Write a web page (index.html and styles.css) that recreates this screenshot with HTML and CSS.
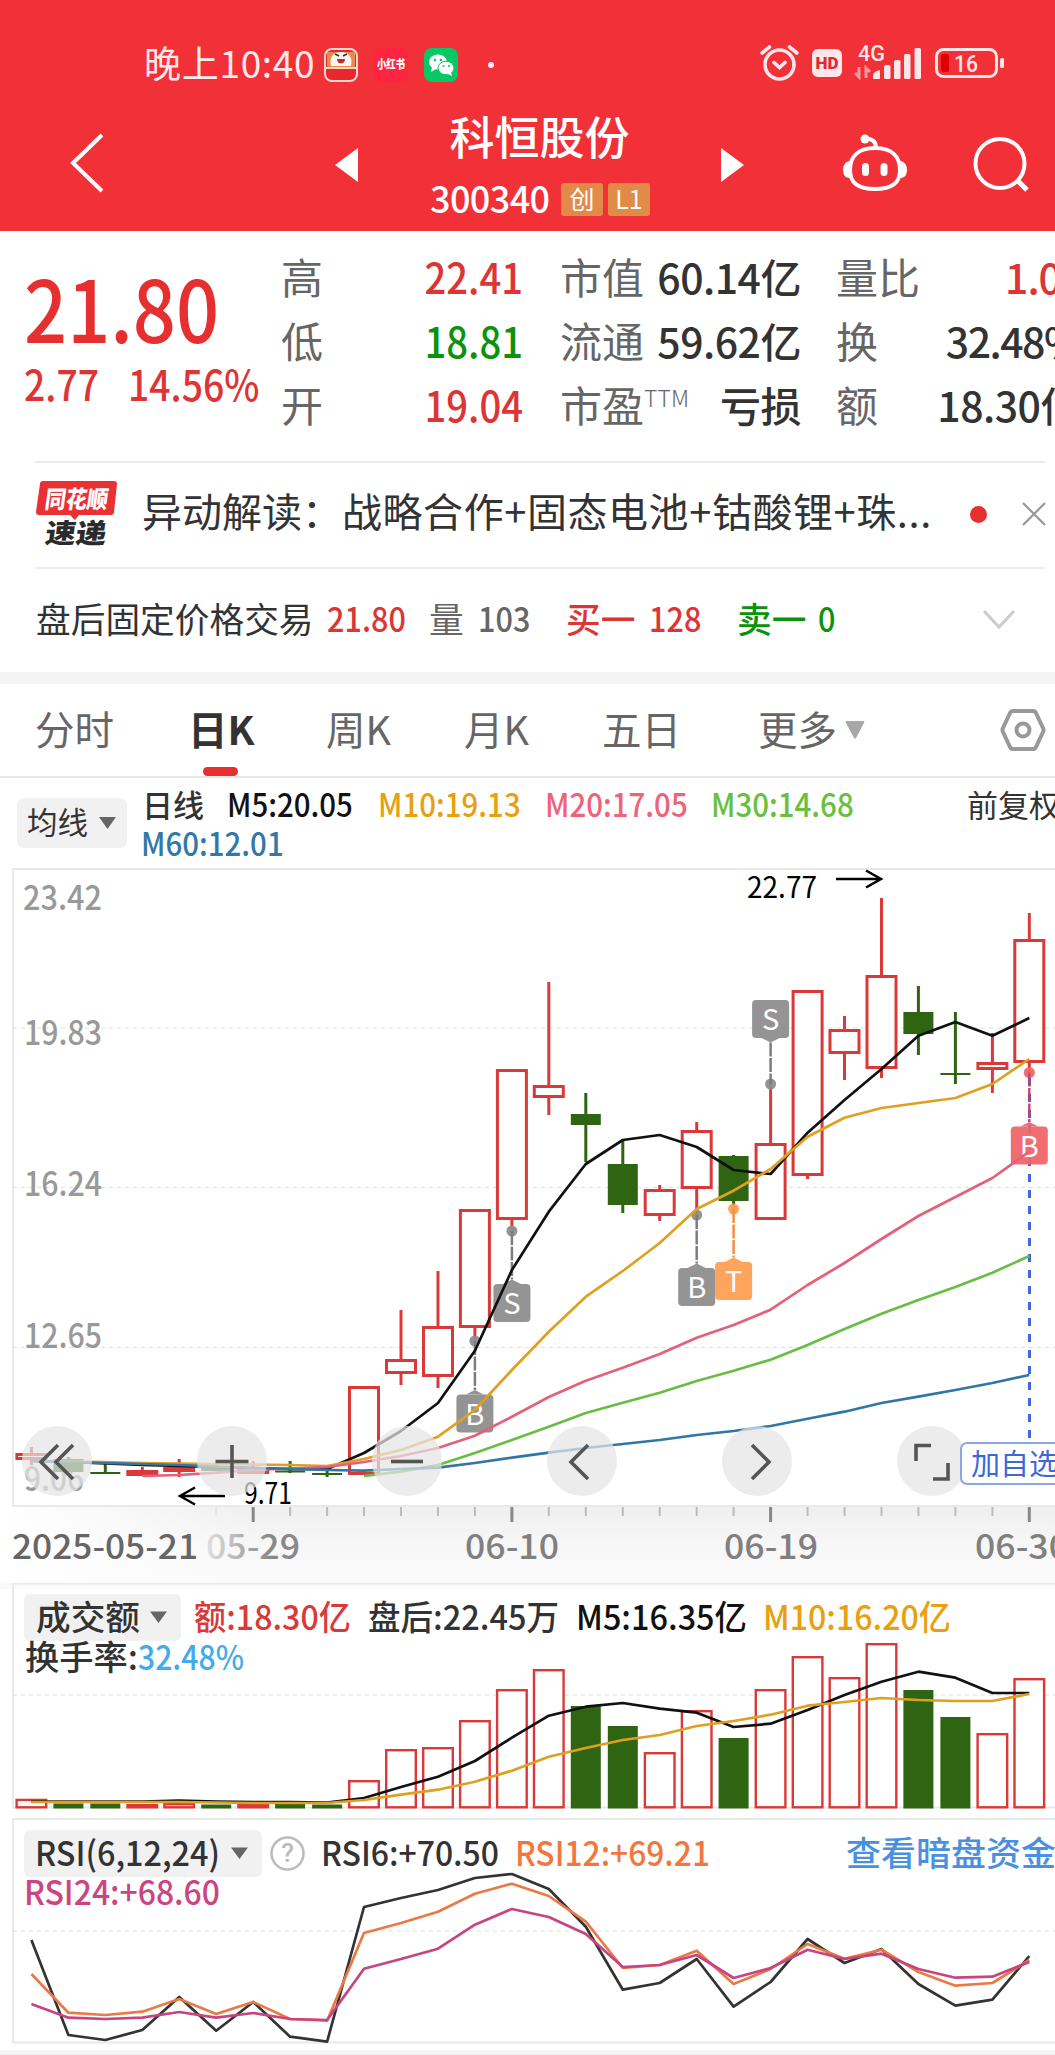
FILE: index.html
```html
<!DOCTYPE html>
<html lang="zh-CN">
<head>
    <meta charset="UTF-8">
    <meta name="viewport" content="width=device-width, initial-scale=1.0">
    <title>科恒股份 300340</title>
    <link rel="stylesheet" href="styles.css">
</head>
<body>
    <header class="header">
        <div class="status">
            <span class="status-time">晚上10:40</span>
            <svg class="app" width="34" height="34" viewBox="0 0 34 34">
                <rect x="1" y="1" width="32" height="32" rx="7" fill="#e8262b" stroke="#f6d9d2" stroke-width="2"/>
                <path d="M3 4h28v15H3z" fill="#e88a4e"/>
                <path d="M7 18c-2-8 2-14 10-14s12 6 10 14z" fill="#fff4ee"/>
                <path d="M11 6l4 2M19 8l4-2" stroke="#333" stroke-width="1.5"/>
                <path d="M13 11h8c0 6-8 6-8 0z" fill="#b93030"/>
                <path d="M2 20h30" stroke="#f8dcc8" stroke-width="2"/>
            </svg>
            <svg class="app" width="34" height="34" viewBox="0 0 34 34">
                <rect width="34" height="34" rx="8" fill="#ff2442"/>
                <text x="17" y="21" text-anchor="middle" textLength="28" lengthAdjust="spacingAndGlyphs" class="app-text">小红书</text>
            </svg>
            <svg class="app" width="34" height="34" viewBox="0 0 34 34">
                <rect width="34" height="34" rx="8" fill="#07c865"/>
                <ellipse cx="14" cy="14" rx="9" ry="7.5" fill="#fff"/>
                <path d="M8 19l-1 5 5-3z" fill="#fff"/>
                <ellipse cx="22" cy="20" rx="8" ry="6.8" fill="#fff" stroke="#07c865"/>
                <path d="M24 26l4 2-1-4z" fill="#fff"/>
                <g fill="#07c865"><circle cx="11" cy="12" r="1.3"/><circle cx="17" cy="12" r="1.3"/><circle cx="19.5" cy="18" r="1.1"/><circle cx="25" cy="18" r="1.1"/></g>
            </svg>
            <i class="status-dot"></i>
            <svg class="status-icons" width="260" height="60" viewBox="0 0 260 60">
                <g fill="none" stroke="#ffe6e8" stroke-width="3.6" stroke-linecap="round">
                    <circle cx="29.500" cy="29.500" r="14.500"/>
                    <path d="M24 27.500l5.500 5 5.500-5M12 18l7.500-6M47 18l-7.500-6"/>
                </g>
                <rect x="62" y="14" width="30" height="28" rx="6" fill="#ffe6e8"/>
                <text x="65.500" y="34" textLength="23" lengthAdjust="spacingAndGlyphs" class="hd">HD</text>
                <text x="108" y="26" textLength="27" lengthAdjust="spacingAndGlyphs" class="net">4G</text>
                <path d="M109 32v10l-4-4M116 43V33l4 4" fill="none" stroke="#f9989c" stroke-width="3"/>
                <g fill="#ffe6e8">
                    <path d="M123 40q0-3 7-5v9h-7z"/>
                    <rect x="134" y="30" width="6.500" height="14" rx="1.500"/>
                    <rect x="144" y="25" width="6.500" height="19" rx="1.500"/>
                    <rect x="154" y="19" width="6.500" height="25" rx="1.500"/>
                    <rect x="164.500" y="13" width="6.500" height="31" rx="1.500"/>
                    <rect x="250" y="23" width="4" height="10" rx="1.500"/>
                </g>
                <rect x="186.500" y="14.500" width="60" height="27" rx="7" fill="none" stroke="#ffe6e8" stroke-width="3"/>
                <rect x="191" y="19" width="8" height="18" rx="2" fill="#e00000"/>
                <text x="204" y="37" textLength="24" lengthAdjust="spacingAndGlyphs" class="bat">16</text>
            </svg>
        </div>
        <nav class="nav">
            <svg class="back" width="36" height="62" viewBox="0 0 36 62"><path d="M33 3L4 31l29 28" fill="none" stroke="#fff" stroke-width="4"/></svg>
            <svg class="prev" width="23" height="34" viewBox="0 0 23 34"><path d="M23 0v34L0 17z" fill="#fff"/></svg>
            <div class="title">
                <h1>科恒股份</h1>
                <div class="code">
                    <span>300340</span>
                    <b>创</b>
                    <b>L1</b>
                </div>
            </div>
            <svg class="next" width="23" height="34" viewBox="0 0 23 34"><path d="M0 0v34l23-17z" fill="#fff"/></svg>
            <svg class="robot" width="66" height="60" viewBox="0 0 66 60">
                <g fill="none" stroke="#fff" stroke-width="4">
                    <path d="M33 15c16 0 25 8 25 22s-9 19-25 19S8 51 8 37s9-22 25-22z"/>
                    <path d="M34 14c0-6-4-8-10-9" stroke-linecap="round"/>
                </g>
                <circle cx="23" cy="6" r="4.500" fill="#fff"/>
                <path d="M7 28q-6 2-6 9t6 8zM59 28q6 2 6 9t-6 8z" fill="#fff"/>
                <rect x="20" y="30" width="7" height="13" rx="3.500" fill="#fff"/>
                <rect x="38.500" y="30" width="7" height="13" rx="3.500" fill="#fff"/>
            </svg>
            <svg class="search" width="56" height="56" viewBox="0 0 56 56" fill="none" stroke="#fff" stroke-width="4">
                <circle cx="27" cy="27.500" r="24.500"/>
                <path d="M44 44l10 10" stroke-width="5"/>
            </svg>
        </nav>
    </header>

    <section class="quote">
        <div class="price">
            <div class="price-now"><span>21.80</span></div>
            <div class="price-change"><span>2.77</span><span>14.56%</span></div>
        </div>
        <dl class="stats stats-a">
            <dt>高</dt><dd class="up">22.41</dd>
            <dt>低</dt><dd class="down">18.81</dd>
            <dt>开</dt><dd class="up">19.04</dd>
        </dl>
        <dl class="stats stats-b">
            <dt>市值</dt><dd>60.14亿</dd>
            <dt>流通</dt><dd>59.62亿</dd>
            <dt>市盈<sup>TTM</sup></dt><dd class="loss">亏损</dd>
        </dl>
        <dl class="stats stats-c">
            <dt>量比</dt><dd class="up cut">1.0</dd>
            <dt>换</dt><dd class="turnover">32.48%</dd>
            <dt>额</dt><dd>18.30亿</dd>
        </dl>
    </section>

    <section class="news">
        <svg class="news-logo" width="82" height="68" viewBox="0 0 82 68">
            <path d="M7 1h71q3 0 3 3l-3 28q0 3-3 3H43l-4 5-5-5H3q-3 0-3-3L4 4q0-3 3-3z" fill="#e93033"/>
            <g transform="skewX(-8)">
                <text x="12" y="28" textLength="63" lengthAdjust="spacingAndGlyphs" class="logo-top">同花顺</text>
                <text x="17" y="63" textLength="61" lengthAdjust="spacingAndGlyphs" class="logo-bottom">速递</text>
            </g>
        </svg>
        <p>异动解读：<span>战略合作+固态电池+钴酸锂+珠...</span></p>
        <i class="news-dot"></i>
        <svg width="24" height="24" viewBox="0 0 24 24" stroke="#999" stroke-width="2.200"><path d="M1 1l22 22M23 1L1 23"/></svg>
    </section>

    <section class="after">
        <span class="after-name">盘后固定价格交易</span>
        <span class="after-price num up">21.80</span>
        <span class="after-label">量</span>
        <span class="after-vol num">103</span>
        <span class="after-buy up">买一</span>
        <span class="after-buyn num up">128</span>
        <span class="after-sell down">卖一</span>
        <span class="num down">0</span>
        <svg class="after-more" width="32" height="20" viewBox="0 0 32 20" fill="none" stroke="#ccc" stroke-width="3"><path d="M1 1l15 16L31 1"/></svg>
    </section>

    <div class="gap"></div>

    <nav class="tabs">
        <a>分时</a>
        <a class="active">日K</a>
        <a>周K</a>
        <a>月K</a>
        <a>五日</a>
        <a>更多<svg width="20" height="18" viewBox="0 0 20 18"><path d="M2 0h16q2 0 1 2l-8 15q-1 1-2 0L1 2Q0 0 2 0z" fill="#a8a8a8"/></svg></a>
        <svg class="gear" width="46" height="44" viewBox="0 0 46 44" fill="none" stroke="#999" stroke-width="4">
            <path d="M13 3h20q2 0 3 2l7 15q1 2 0 4l-7 15q-1 2-3 2H13q-2 0-3-2L3 24q-1-2 0-4L10 5q1-2 3-2z"/>
            <circle cx="23" cy="22" r="6.500"/>
        </svg>
    </nav>

    <section class="ma">
        <button class="ma-btn">均线<svg width="17" height="12" viewBox="0 0 17 12"><path d="M0 0h17L8.500 12z" fill="#666"/></svg></button>
        <div class="ma-lines">
            <div class="ma-row">
                <span class="ma-name">日线</span>
                <span class="m5">M5:20.05</span>
                <span class="m10">M10:19.13</span>
                <span class="m20">M20:17.05</span>
                <span class="m30">M30:14.68</span>
            </div>
            <div class="ma-row"><span class="m60">M60:12.01</span></div>
        </div>
        <span class="adjust">前复权</span>
    </section>

    <section class="chart">
        <svg id="kline" width="1055" height="715" viewBox="0 868 1055 715">
            <defs>
                <linearGradient id="shade" x1="0" y1="0" x2="0" y2="1">
                    <stop offset="0" stop-color="#efefef"/>
                    <stop offset=".5" stop-color="#f7f7f7"/>
                    <stop offset="1" stop-color="#fafafa"/>
                </linearGradient>
                <linearGradient id="fade" x1="0" y1="0" x2="1" y2="0">
                    <stop offset="0" stop-color="#fff"/>
                    <stop offset="1" stop-color="#fff" stop-opacity="0"/>
                </linearGradient>
                <linearGradient id="dateFade" gradientUnits="userSpaceOnUse" x1="205" y1="0" x2="300" y2="0">
                    <stop offset="0" stop-color="#e2e2e2"/>
                    <stop offset=".7" stop-color="#888"/>
                </linearGradient>
            </defs>
            <rect x="0" y="1507" width="1055" height="76" fill="url(#shade)"/>
            <rect x="0" y="1507" width="260" height="76" fill="url(#fade)"/>
            <path class="frame" d="M1055 869H13V1506H1055"/>
            <path class="grid" d="M13 1028H1055M13 1187.500H1055M13 1347.500H1055"/>
            <g class="price-axis">
                <text x="23" y="910" textLength="79" lengthAdjust="spacingAndGlyphs">23.42</text>
                <text x="24" y="1045" textLength="78" lengthAdjust="spacingAndGlyphs">19.83</text>
                <text x="24" y="1196" textLength="78" lengthAdjust="spacingAndGlyphs">16.24</text>
                <text x="24" y="1348" textLength="78" lengthAdjust="spacingAndGlyphs">12.65</text>
                <text x="24" y="1491" textLength="60" lengthAdjust="spacingAndGlyphs">9.06</text>
            </g>
            <g id="candles"></g>
            <path class="cursor" d="M1029.500 1078V1443"/>
            <g id="marks"></g>
            <g id="averages"></g>
            <g class="extreme">
                <text x="747" y="898" textLength="70" lengthAdjust="spacingAndGlyphs">22.77</text>
                <path d="M836 879h45M866 870.500l15 8.500-15 8.500"/>
                <text x="244" y="1504" textLength="48" lengthAdjust="spacingAndGlyphs">9.71</text>
                <path d="M225 1496h-45M195 1487.500l-15 8.500 15 8.500"/>
            </g>
            <g id="ticks"></g>
            <g class="dates">
                <text class="date-start" x="12" y="1559" textLength="186" lengthAdjust="spacingAndGlyphs">2025-05-21</text>
                <text class="date-faded" x="206" y="1559" textLength="94" lengthAdjust="spacingAndGlyphs">05-29</text>
                <text x="465" y="1559" textLength="94" lengthAdjust="spacingAndGlyphs">06-10</text>
                <text x="724" y="1559" textLength="94" lengthAdjust="spacingAndGlyphs">06-19</text>
                <text x="975" y="1559" textLength="94" lengthAdjust="spacingAndGlyphs">06-30</text>
            </g>
        </svg>
        <div class="tools">
            <button><svg viewBox="0 0 70 70"><path d="M36 19L19 36l17 17M51 19L34 36l17 17"/></svg></button>
            <button><svg viewBox="0 0 70 70"><path d="M35 19v33M18.500 35.500h33"/></svg></button>
            <button><svg viewBox="0 0 70 70"><path d="M19 35.500h32"/></svg></button>
            <button><svg viewBox="0 0 70 70"><path d="M41 19L24 36l17 17"/></svg></button>
            <button><svg viewBox="0 0 70 70"><path d="M30 19l17 17-17 17"/></svg></button>
            <button><svg viewBox="0 0 70 70"><path d="M19 35V19.500h15M51 37v16H36"/></svg></button>
        </div>
        <span class="add">加自选</span>
    </section>

    <section class="panel">
        <svg width="1055" height="235" viewBox="0 1583 1055 235">
            <rect x="0" y="1583" width="1055" height="6" fill="#fafafa"/>
            <path class="frame" d="M1055 1583.500H13V1807.500H1055"/>
            <path class="grid" d="M13 1695H1055"/>
            <rect class="chip" x="24" y="1594" width="157" height="47" rx="6"/>
            <path d="M150 1611.500h17l-8.500 11.500z" fill="#666"/>
            <g id="volumes"></g>
            <g id="volumeAverages"></g>
            <g class="legend">
                <text x="36" y="1630" textLength="104" lengthAdjust="spacingAndGlyphs">成交额</text>
                <text x="194" y="1630" textLength="157" lengthAdjust="spacingAndGlyphs" fill="#d93a39">额:18.30亿</text>
                <text x="368" y="1630" textLength="191" lengthAdjust="spacingAndGlyphs">盘后:22.45万</text>
                <text x="576" y="1630" textLength="171" lengthAdjust="spacingAndGlyphs" fill="#111">M5:16.35亿</text>
                <text x="763" y="1630" textLength="188" lengthAdjust="spacingAndGlyphs" fill="#e8a010">M10:16.20亿</text>
                <text x="25" y="1669.500" textLength="113" lengthAdjust="spacingAndGlyphs">换手率:</text>
                <text x="138" y="1669.500" textLength="106" lengthAdjust="spacingAndGlyphs" fill="#42abe9">32.48%</text>
            </g>
        </svg>
    </section>

    <section class="panel">
        <svg width="1055" height="232" viewBox="0 1818 1055 232">
            <path class="frame" d="M1055 1819H13V2042.500H1055"/>
            <path class="grid" d="M13 1931H1055"/>
            <rect class="chip" x="24" y="1830" width="238" height="47" rx="6"/>
            <path d="M231 1847.500h17l-8.500 11.500z" fill="#666"/>
            <circle cx="287.500" cy="1853.500" r="16" fill="none" stroke="#bbb" stroke-width="2.500"/>
            <text x="287.500" y="1862" text-anchor="middle" class="help">?</text>
            <g id="rsi"></g>
            <g class="legend">
                <text x="35" y="1866" textLength="185" lengthAdjust="spacingAndGlyphs">RSI(6,12,24)</text>
                <text x="321" y="1866" textLength="178" lengthAdjust="spacingAndGlyphs">RSI6:+70.50</text>
                <text x="515" y="1866" textLength="195" lengthAdjust="spacingAndGlyphs" fill="#f0783e">RSI12:+69.21</text>
                <text x="846" y="1865.500" textLength="210" lengthAdjust="spacingAndGlyphs" fill="#4a90e0">查看暗盘资金</text>
                <text x="24" y="1905" textLength="196" lengthAdjust="spacingAndGlyphs" fill="#cb4583">RSI24:+68.60</text>
            </g>
        </svg>
    </section>

    <script src="chart.js"></script>
</body>
</html>
```
FILE: styles.css
```css
* {
    box-sizing: border-box;
}

body {
    margin: 0;
    width: 1055px;
    height: 2055px;
    overflow: hidden;
    background: #f4f4f4;
    color: #333;
    font-family: "Noto Sans CJK SC", "Noto Sans", sans-serif;
}

svg {
    display: block;
    flex: none;
}

.up {
    color: #dd3535;
}

.down {
    color: #0b930b;
}

/* header */
.header {
    height: 231px;
    background: #f23037;
    color: #fff;
}

.status {
    display: flex;
    align-items: center;
    height: 96px;
    padding: 33px 0 0 144px;
    color: #ffe9ea;
}

.status-time {
    width: 180px;
    margin-top: -6px;
    font-size: 37px;
    line-height: 60px;
    letter-spacing: 0.7px;
    white-space: nowrap;
}

.app {
    margin-right: 16px;
}

.app-text {
    font-size: 12px;
    font-weight: 900;
    fill: #fff;
}

.status-dot {
    width: 6px;
    height: 6px;
    margin-left: 14px;
    border-radius: 50%;
    background: #ffe9ea;
}

.status-icons {
    margin-left: 256px;
}

.hd {
    font: 900 17px Roboto, sans-serif;
    fill: #e02a32;
}

.net {
    font: 500 22px Roboto, sans-serif;
    fill: #ffe6e8;
}

.bat {
    font: 500 24px Roboto, sans-serif;
    fill: #ffe6e8;
}

.nav {
    display: flex;
    height: 135px;
    padding-left: 69px;
}

.back {
    margin-top: 36px;
}

.prev {
    margin: 52px 0 0 230px;
}

.title {
    width: 363px;
    text-align: center;
}

.title h1 {
    margin: 0;
    padding-top: 9px;
    font-size: 45px;
    font-weight: 500;
    line-height: 62px;
}

.code {
    display: flex;
    align-items: center;
    margin: 13px 0 0 72px;
    height: 38px;
    font-size: 36px;
    line-height: 38px;
}

.code span {
    width: 131px;
    margin-top: -5px;
    font-weight: 500;
    text-align: left;
    letter-spacing: -0.6px;
}

.code b {
    width: 42px;
    height: 33px;
    margin-right: 5px;
    border-radius: 3px;
    background: #e28b49;
    font-size: 25px;
    font-weight: 400;
    line-height: 31px;
}

.next {
    margin-top: 52px;
}

.robot {
    margin: 37px 0 0 98px;
}

.search {
    margin: 40px 0 0 65px;
}

/* quote */
.quote {
    display: flex;
    height: 230px;
    background: #fff;
    overflow: hidden;
}

.price {
    width: 281px;
    flex: none;
    padding-left: 24px;
    color: #e63030;
}

.price-now {
    margin-top: 20px;
    font-size: 86px;
    font-weight: 500;
    line-height: 110px;
}

.price-now span {
    display: inline-block;
    transform: scaleX(0.88);
    transform-origin: left;
}

.price-change {
    display: flex;
    margin-top: 2px;
    color: #dd3535;
    font-size: 42px;
    font-weight: 500;
    line-height: 40px;
}

.price-change span {
    width: 104px;
    flex: none;
    transform: scaleX(0.89);
    transform-origin: left;
}

.stats {
    display: grid;
    grid-template-columns: 84px 1fr;
    grid-auto-rows: 64px;
    margin: 13px 0 0;
    flex: none;
    font-size: 42px;
    line-height: 64px;
    white-space: nowrap;
}

.stats dt {
    color: #666;
}

.stats dd {
    margin: 0;
    font-weight: 500;
    text-align: right;
    transform: scaleX(0.91);
    transform-origin: right;
}

.stats-a {
    width: 242px;
}

.stats-b {
    width: 241px;
    margin-left: 37px;
}

.stats-b dd,
.stats-c dd {
    transform: none;
    font-size: 41px;
    letter-spacing: -0.5px;
}

.stats-c {
    width: 245px;
    margin-left: 35px;
}

.stats-c .cut {
    padding-right: 20px;
    letter-spacing: -1px;
}

.stats-c .turnover {
    letter-spacing: -1.5px;
}

.stats sup {
    font-size: 23px;
    font-weight: 300;
    line-height: 0;
    vertical-align: 15px;
}

/* news line */
.news {
    display: flex;
    align-items: center;
    height: 106px;
    padding-left: 36px;
    background: linear-gradient(#ececec, #ececec) 35px 0 / 1010px 2px no-repeat, #fff;
}

.news-logo {
    margin-right: 24px;
}

.logo-top {
    font-size: 24px;
    font-weight: 900;
    fill: #fff;
}

.logo-bottom {
    font-size: 27px;
    font-weight: 900;
    fill: #2b2b2b;
}

.news p {
    width: 828px;
    margin: -8px 0 0;
    font-size: 40px;
    line-height: 60px;
    white-space: nowrap;
}

.news p span {
    letter-spacing: 0.55px;
}

.news-dot {
    width: 17px;
    height: 17px;
    margin-right: 35px;
    border-radius: 50%;
    background: #e63030;
}

/* after-hours trading */
.after {
    display: flex;
    align-items: center;
    height: 105px;
    padding-left: 36px;
    background: linear-gradient(#ececec, #ececec) 35px 0 / 1010px 2px no-repeat, #fff;
    font-size: 34.7px;
    line-height: 50px;
    white-space: nowrap;
}

.after span {
    flex: none;
    margin-top: -4px;
}

.after .num {
    font-size: 34px;
    font-weight: 500;
    transform: scaleX(0.9);
    transform-origin: left;
}

.after-name {
    width: 291px;
}

.after-price {
    width: 102px;
}

.after-label {
    width: 49px;
    color: #666;
}

.after-vol {
    width: 88px;
    color: #666;
}

.after-buy {
    width: 83px;
    font-weight: 500;
}

.after-buyn {
    width: 88px;
}

.after-sell {
    width: 81px;
    font-weight: 500;
}

.after-more {
    margin-left: 146px;
}

.gap {
    height: 12px;
    background: #f4f4f4;
}

/* period tabs */
.tabs {
    display: grid;
    grid-template-columns: 153px 138px 138px 138px 156px 242px 46px;
    align-items: center;
    height: 94px;
    padding-left: 35px;
    border-bottom: 2px solid #e8e8e8;
    background: #fff;
    color: #666;
    font-size: 39.5px;
    line-height: 90px;
}

.tabs a {
    display: flex;
    align-items: center;
    position: relative;
    margin-top: -4px;
}

.tabs a svg {
    margin: 4px 0 0 8px;
}

.tabs .active {
    color: #333;
    font-weight: 700;
}

.tabs .active::after {
    content: "";
    position: absolute;
    left: 15px;
    bottom: -3px;
    width: 35px;
    height: 9px;
    border-radius: 5px;
    background: #e63030;
}

/* moving averages */
.ma {
    display: flex;
    height: 90px;
    background: #fff;
    overflow: hidden;
    white-space: nowrap;
}

.ma-btn {
    display: flex;
    align-items: center;
    justify-content: space-between;
    width: 110px;
    height: 50px;
    margin: 20px 15px 0 17px;
    padding: 0 11px 4px 10px;
    border: 0;
    border-radius: 7px;
    background: #f1f1f1;
    color: #333;
    font: inherit;
    font-size: 30.5px;
    flex: none;
}

.ma-btn svg {
    margin-top: 3px;
}

.ma-lines {
    width: 825px;
    padding-top: 6px;
    flex: none;
}

.ma-row {
    display: flex;
    height: 39px;
    font-size: 32px;
    font-weight: 500;
    line-height: 39px;
}

.ma-row span {
    flex: none;
    width: 166.5px;
    transform: scaleX(0.92);
    transform-origin: left;
}

.ma-row .ma-name {
    width: 85px;
    font-size: 31px;
    transform: none;
}

.ma-row .m5 {
    width: 151px;
    color: #111;
}

.m10 {
    color: #e8a010;
}

.m20 {
    color: #ee6378;
}

.m30 {
    color: #68c13e;
}

.ma-row .m60 {
    margin-left: -1px;
    color: #3378a8;
}

.adjust {
    padding-top: 5px;
    font-size: 31px;
    line-height: 42px;
}

/* charts */
.chart {
    position: relative;
    background: #fff;
    overflow: hidden;
}

.panel {
    background: #fff;
}

.frame {
    fill: none;
    stroke: #e9e9e9;
    stroke-width: 2;
}

.grid {
    stroke: #dedede;
    stroke-width: 1.2;
    stroke-dasharray: 4 4;
}

.price-axis text,
.dates text {
    font-size: 34px;
    font-weight: 500;
    fill: #999;
}

.dates text {
    fill: #808080;
}

.dates .date-start {
    fill: #666;
}

.dates .date-faded {
    fill: url(#dateFade);
}

.extreme text {
    font-size: 30px;
    fill: #000;
}

.extreme path {
    fill: none;
    stroke: #000;
    stroke-width: 2.5;
}

.cursor {
    fill: none;
    stroke: #3d68d8;
    stroke-width: 3;
    stroke-dasharray: 8 8;
}

.line {
    fill: none;
    stroke-width: 2.7;
    stroke-linejoin: round;
}

.mark {
    opacity: 0.95;
}

.mark text {
    font-size: 29px;
    fill: #fff;
    text-anchor: middle;
}

.chip {
    fill: #f1f1f1;
}

.legend text {
    font-size: 34px;
    font-weight: 500;
}

.legend text:not([fill]) {
    fill: #333;
}

.help {
    font: 500 26px Roboto, sans-serif;
    fill: #bbb;
}

.tools {
    position: absolute;
    top: 558px;
    left: 22px;
    display: flex;
    gap: 105px;
}

.tools button {
    width: 70px;
    height: 70px;
    padding: 0;
    border: 0;
    border-radius: 50%;
    background: rgba(229, 229, 229, 0.72);
}

.tools path {
    fill: none;
    stroke: #555;
    stroke-width: 3.6;
}

.add {
    position: absolute;
    top: 574px;
    left: 960px;
    width: 110px;
    height: 43px;
    padding-left: 9px;
    border: 2px solid #8ba6e6;
    border-radius: 7px;
    background: #fff;
    color: #3d68d8;
    font-size: 29px;
    line-height: 37px;
    white-space: nowrap;
}
```
FILE: chart.js
```js
const RED = '#d93a39';
const GREEN = '#2f6512';
const first = 31.4;
const step = 36.96;
const x = i => +(first + step * i).toFixed(1);
const byId = id => document.getElementById(id);

// [rising, body top, body bottom, high, low]
const candles = [
    [1, 1453, 1460, 1447, 1465], [0, 1459, 1472, 1457, 1472], [0, 1472, 1474, 1461, 1474],
    [1, 1470, 1476, 1467, 1476], [1, 1467, 1472, 1459, 1477], [0, 1467, 1471, 1464, 1471],
    [1, 1467, 1474, 1461, 1474], [0, 1470.5, 1472.5, 1461, 1473], [0, 1473, 1475, 1471, 1477],
    [1, 1386, 1475, 1386, 1475], [1, 1359, 1374, 1310, 1385], [1, 1326, 1377, 1271, 1388],
    [1, 1209, 1328, 1209, 1341], [1, 1069, 1220, 1069, 1231], [1, 1085, 1098, 982, 1115],
    [0, 1114, 1125, 1093, 1162], [0, 1164, 1205, 1141, 1213], [1, 1189, 1216, 1185, 1221],
    [1, 1130, 1189, 1122, 1215], [0, 1156, 1201, 1155, 1209], [1, 1143, 1220, 1084, 1220],
    [1, 990, 1176, 990, 1179], [1, 1029, 1054, 1016, 1080], [1, 975, 1069, 898, 1078],
    [0, 1012, 1034, 986, 1055], [0, 1073, 1075, 1012, 1084], [1, 1062, 1070, 1033, 1093],
    [1, 939, 1063, 913, 1072]
];

const volumes = [
    1798.7, 1803.5, 1803.5, 1804, 1803, 1804.5, 1804, 1804, 1804.5, 1780, 1749, 1747, 1720, 1689,
    1669, 1706, 1726, 1752, 1710, 1738, 1689, 1656, 1677, 1643, 1690, 1717, 1733, 1678
];

function line(color, start, ys) {
    const points = ys.map((y, i) => `${x(i + start)},${y}`).join(' ');
    return `<polyline class="line" stroke="${color}" points="${points}"/>`;
}

function body(up, cx, top, bottom, stroke) {
    if (!up) {
        return `<rect x="${cx - 15}" y="${top}" width="30" height="${bottom - top}" fill="${GREEN}"/>`;
    }
    const half = stroke / 2;
    return `<rect x="${cx - 16 + half}" y="${top + half}" width="${32 - stroke}" height="${Math.max(bottom - top - stroke, 1)}" fill="#fff" stroke="${RED}" stroke-width="${stroke}"/>`;
}

byId('candles').innerHTML = candles.map(([up, top, bottom, high, low], i) => {
    const color = up ? RED : GREEN;
    return `<path d="M${x(i)} ${high}V${low}" stroke="${color}" stroke-width="3"/>` + body(up, x(i), top, bottom, 3);
}).join('');

// [index, letter, box top, dot y, color, line color]
const marks = [
    [12, 'B', 1394.5, 1341, '#8f8f8f', '#777'],
    [13, 'S', 1284, 1231, '#8f8f8f', '#777'],
    [18, 'B', 1268, 1215, '#8f8f8f', '#777'],
    [19, 'T', 1262, 1209, '#ffa055', '#f08a3c'],
    [20, 'S', 1000, 1084, '#8f8f8f', '#777'],
    [27, 'B', 1126.5, 1072.5, '#f06669', '#c04070']
];

byId('marks').innerHTML = marks.map(([i, letter, top, dot, color, stroke]) => {
    const cx = x(i);
    const below = dot < top;
    const edge = below ? top : top + 38;
    const tip = below ? edge - 4.5 : edge + 4.5;
    const [from, to] = below ? [dot, tip] : [tip, dot];
    return `<g class="mark">
        <circle cx="${cx}" cy="${dot}" r="5.5" fill="${color}"/>
        <path d="M${cx} ${from}V${to}" stroke="${stroke}" stroke-width="2.5" stroke-dasharray="14 1.5"/>
        <path d="M${cx - 9} ${edge}L${cx} ${tip}L${cx + 9} ${edge}z" fill="${color}"/>
        <rect x="${cx - 18.5}" y="${top}" width="37" height="38" rx="4" fill="${color}"/>
        <text x="${cx}" y="${top + 30}">${letter}</text>
    </g>`;
}).join('');

byId('averages').innerHTML =
    line('#111', 0, [1461, 1462, 1463.5, 1465, 1466, 1467, 1468, 1469, 1469, 1453, 1431, 1403, 1350.7, 1270, 1211.7, 1164, 1140, 1135, 1147, 1170, 1174, 1132.7, 1100, 1069, 1035.7, 1022, 1035.7, 1018]) +
    line('#dfa020', 0, [1461, 1461.5, 1462, 1463, 1463.5, 1464, 1464.5, 1465, 1466, 1459, 1450, 1436.7, 1410, 1370, 1331.7, 1296.7, 1271, 1243, 1209, 1190.7, 1169, 1136.7, 1117.7, 1108, 1103, 1098, 1084, 1059]) +
    line('#e5607a', 3, [1476, 1475, 1472.7, 1470, 1468.5, 1467, 1462, 1456, 1448, 1435.7, 1416.7, 1397, 1380.7, 1367.7, 1354, 1337.7, 1325, 1309.7, 1285, 1263, 1239, 1216, 1197, 1178, 1151.7]) +
    line('#68bd45', 9, [1476, 1471.7, 1465, 1453, 1440, 1426.7, 1413, 1402.7, 1392.7, 1381, 1370.7, 1359.7, 1345, 1329, 1313.7, 1300, 1287, 1272.7, 1256]) +
    line('#3276a6', 0, [1461, 1462, 1463, 1464, 1465, 1466.5, 1468, 1469, 1470, 1470.7, 1469, 1467.7, 1463, 1457.7, 1452.7, 1448, 1444, 1440, 1435, 1431, 1426, 1418.7, 1411.7, 1403, 1396.7, 1390, 1383, 1375]);

// one tick a day, a long one under each date
let ticks = '';
for (let i = 5; i < candles.length; i++) {
    const major = i % 7 === 6;
    const color = major ? '#888' : i === 5 ? '#e4e4e4' : '#bbb';
    ticks += `<path d="M${x(i)} 1507V${major ? 1522 : 1516}" stroke="${color}" stroke-width="${major ? 3 : 2}"/>`;
}
byId('ticks').innerHTML = ticks;

byId('volumes').innerHTML = volumes.map((top, i) => body(candles[i][0], x(i), top, 1808.5, 2.4)).join('');

byId('volumeAverages').innerHTML =
    line('#111', 0, [1801.5, 1801.5, 1801.5, 1801.5, 1800.5, 1801.5, 1802, 1802, 1802.5, 1798, 1787, 1776.7, 1761, 1737.7, 1715.7, 1706.7, 1703, 1708.7, 1712.7, 1727, 1723.7, 1710, 1695, 1681.7, 1671.7, 1677.7, 1693, 1693]) +
    line('#dfa020', 0, [1802, 1802, 1802, 1802, 1802, 1802.5, 1803, 1803, 1803, 1800, 1794.7, 1789.7, 1781.7, 1770.7, 1756.7, 1748, 1740, 1735, 1726, 1721, 1714.7, 1705.7, 1702, 1698, 1700, 1701, 1701, 1694]);

byId('rsi').innerHTML =
    line('#333', 0, [1940, 2035, 2040, 2030, 1997, 2030.7, 2002, 2036.7, 2041.7, 1907, 1898, 1890, 1878, 1874, 1889, 1926.7, 1989.7, 1983, 1959, 2006.7, 1982, 1939, 1963, 1949, 1984, 2005.7, 1999.7, 1956]) +
    line('#ea7a45', 0, [1974, 2012.7, 2015, 2011.7, 1999, 2014, 2002, 2019, 2020.7, 1933, 1923, 1911.7, 1893.7, 1883.7, 1896, 1921.7, 1968, 1965, 1950.7, 1984, 1969, 1944, 1958.7, 1949.7, 1972, 1985.7, 1983, 1960]) +
    line('#c8447f', 0, [2004, 2017.7, 2019, 2017.7, 2012, 2017.7, 2013, 2019, 2020, 1968.7, 1959, 1948.7, 1924.7, 1909, 1917, 1934, 1967, 1965, 1955, 1978, 1968, 1949.7, 1959, 1953.7, 1969, 1977.7, 1976.7, 1962]);
```
